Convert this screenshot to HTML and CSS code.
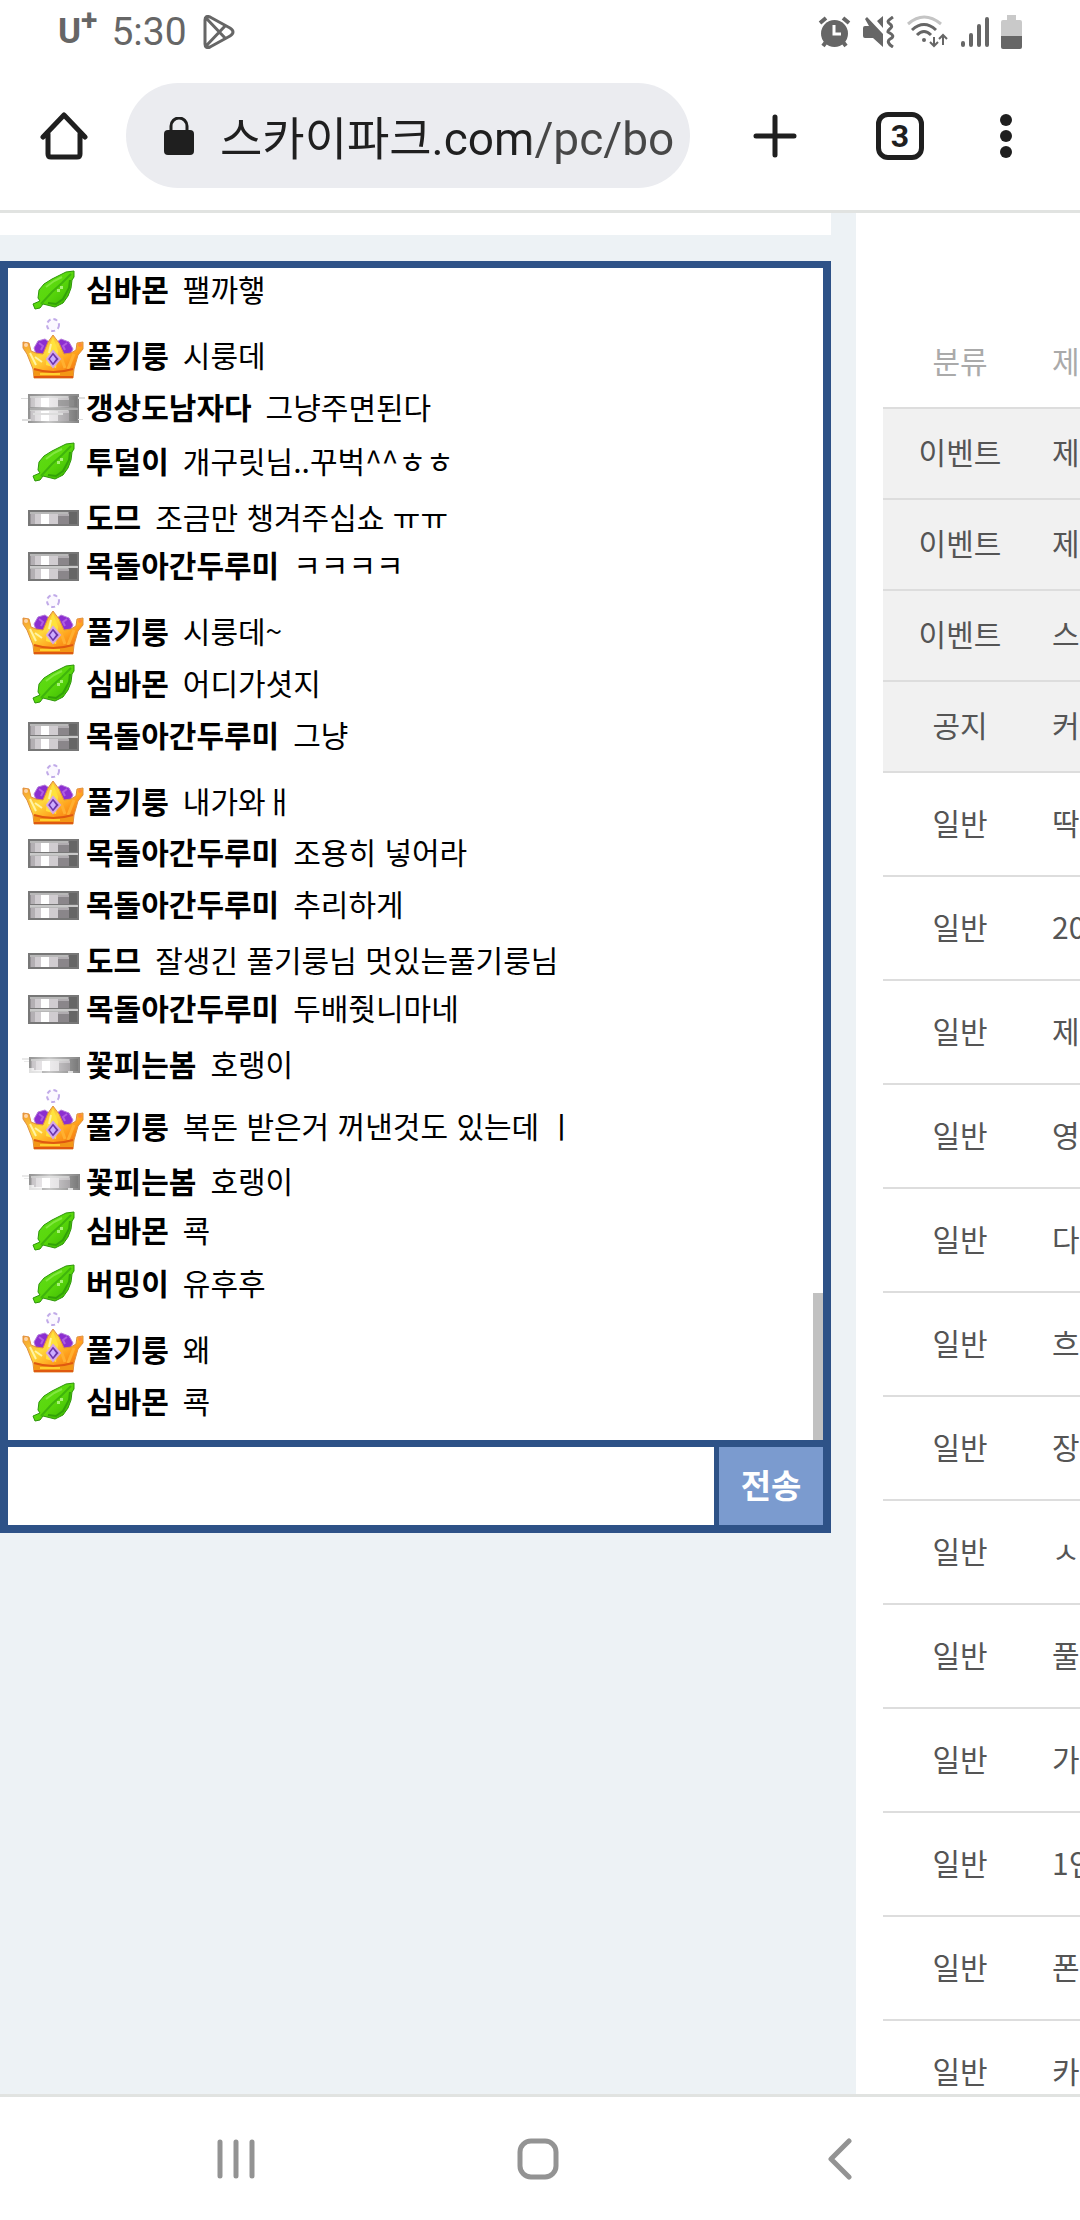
FILE: index.html
```html
<!DOCTYPE html>
<html lang="ko">
<head>
  <meta charset="UTF-8" />
  <title>스카이파크</title>
  <meta name="viewport" content="width=device-width, initial-scale=1.0" />
  <link rel="stylesheet" href="styles.css">
</head>
<body>

  <!-- Rank icons -->
  <svg class="defs" aria-hidden="true">
    <defs>
      <linearGradient id="leafFill" x1="0" y1="0" x2="1" y2="1">
        <stop offset="0" stop-color="#5fdc1c"/>
        <stop offset="0.5" stop-color="#5ad80c"/>
        <stop offset="1" stop-color="#35b000"/>
      </linearGradient>
      <linearGradient id="gold" x1="0" y1="0" x2="1" y2="1">
        <stop offset="0" stop-color="#f08a28"/>
        <stop offset="0.4" stop-color="#ffd83c"/>
        <stop offset="0.65" stop-color="#ffa01c"/>
        <stop offset="1" stop-color="#ec5a08"/>
      </linearGradient>
      <linearGradient id="worn" x1="0" y1="0" x2="1" y2="0">
        <stop offset="0" stop-color="#fff" stop-opacity="0.2"/>
        <stop offset="0.4" stop-color="#fff" stop-opacity="0.6"/>
        <stop offset="1" stop-color="#fff" stop-opacity="0.1"/>
      </linearGradient>
    </defs>
    <symbol id="leaf" viewBox="0 0 43 40">
      <path d="M42 1 34 2 28 5 20 9 12 14 7 20 6 28 8 31 1 34 3 39 8 38 11 34 15 35 23 37 31 33 36 26 39 18 40 10 42 7Z" fill="url(#leafFill)" stroke="#2d9608" stroke-width="1"/>
      <path d="M39 4 30 13 20 22 9 34" fill="none" stroke="#3fb40c" stroke-width="2"/>
      <path d="M30 7 22 11 14 17" fill="none" stroke="#82e83f" stroke-width="2"/>
      <path d="M25 19h3v-3h3v3h-3v3h-3z" fill="#a7f277"/>
      <path d="M38 10 37 18 31 29 24 34 16 33" fill="none" stroke="#32a208" stroke-width="2"/>
    </symbol>
    <symbol id="crown" viewBox="0 0 62 62">
      <circle cx="31" cy="8" r="6" fill="#fbf8ff" stroke="#c0aae8" stroke-width="2" stroke-dasharray="4 3"/>
      <path d="M12 31 16 24 23 22 31 28 39 22 47 25 51 32 47 40 15 40Z" fill="#8c2ed0" stroke="#b47adb"/>
      <path d="M17 26l4 3-2 4M45 26l-4 3 2 4" fill="none" stroke="#b05ce0" stroke-width="2"/>
      <path d="M1 25 7 26 9 34 14 36 21 37 26 25 31 18 37 26 42 37 49 36 54 33 55 26 61 25 61 32 56 38 52 52 51 61 12 61 11 52 5 37 1 31Z" fill="url(#gold)" stroke="#e09040" stroke-width="1"/>
      <path d="M31 20 25 35 24 48 34 51 36 34Z" fill="#ffe23c"/>
      <path d="M29 27 27 36M8 36 14 48M13 40l7 5" fill="none" stroke="#fff3a4" stroke-width="2"/>
      <path d="M39 40 43 51M52 37 46 52" fill="none" stroke="#ffb030" stroke-width="3"/>
      <path d="M12 52Q31 58 51 52L51 60H12Z" fill="#f39716"/>
      <path d="M12 52Q31 58 51 52M12 60H51" fill="none" stroke="#df5910" stroke-width="2"/>
      <path d="M18 57H38" stroke="#ffd030" stroke-width="2"/>
      <path d="M31 34 38 42 31 50 25 42Z" fill="#6b35ad" stroke="#d5a5e5" stroke-width="2"/>
      <path d="M31 38 34 42 31 46 28 42Z" fill="#ccadff"/>
      <circle cx="4" cy="28" r="2" fill="#ffd5a8"/>
      <circle cx="58" cy="28" r="2" fill="#ff8a3c"/>
    </symbol>
    <symbol id="bar" viewBox="0 0 51 16">
      <path fill="#777" d="M0 0h51v16H0z"/>
      <path fill="#969296" d="M2 2h47v12H2z"/>
      <path fill="#d0ccd0" d="M3 4h27v10H3z"/>
      <path fill="#b3afb3" d="M3 4h4v10H3z"/>
      <path fill="#fff" d="M13 4h8v10h-8z"/>
      <path fill="#8a868a" d="M30 6h11v8H30z"/>
      <path fill="#b0acb0" d="M30 4h11v2H30z"/>
      <path fill="#666" d="M41 2h8v12h-8z"/>
      <path fill="#b8b8b8" d="M2 2h38v2H2z"/>
    </symbol>
    <symbol id="bars" viewBox="0 0 51 29">
      <use href="#bar" width="51" height="16"/>
      <use href="#bar" y="13" width="51" height="16"/>
      <path fill="#c9c9c9" d="M2 14h48v2H2z"/>
    </symbol>
    <symbol id="bar-worn" viewBox="0 0 58 18">
      <use href="#bar" x="7" y="1" width="51" height="16"/>
      <path fill="url(#worn)" d="M7 0h51v18H7z"/>
      <path fill="#e9e9e9" d="M0 2h7v2H0zM2 5h5v1H2z"/>
      <path fill="#fff" d="M7 12h5v2h8v4H7zM46 15h5v3h-5z" opacity="0.7"/>
    </symbol>
    <symbol id="bars-worn" viewBox="0 0 64 29">
      <use href="#bars" x="7" y="0" width="51" height="29"/>
      <path fill="url(#worn)" d="M7 0h51v29H7z"/>
      <path fill="#8d8d8d" d="M7 0h51v2H7zM7 14h51v2H7zM37 6h16v6H37z" opacity="0.6"/>
      <path fill="#ddd" d="M0 4h7v1H0zM1 25h9v2H1zM57 3h7v2h-7zM57 25h5v1h-5zM12 19h30v2H12z"/>
    </symbol>
  </svg>

  <!-- Status bar -->
  <div class="status">
    <div class="status-group">
      <span class="carrier">U<sup>+</sup></span>
      <span class="time">5:30</span>
      <svg class="play" viewBox="0 0 32 34" fill="none" stroke="#666" stroke-width="3" stroke-linejoin="round">
        <path d="M2 5Q2 0 7 2L27 13Q33 17 27 21L7 32Q2 34 2 29ZM3 3 23 24M3 31 23 10"/>
      </svg>
    </div>
    <div class="status-group status-icons">
      <svg width="33" height="32" viewBox="0 0 33 32" fill="none" stroke="#666" stroke-width="4">
        <circle cx="16.500" cy="17.500" r="13.500" fill="#666" stroke="none"/>
        <path d="M2 7 8 2M31 7 25 2" stroke-width="4"/>
        <path d="M5 30 8 26M28 30 25 26"/>
        <path d="M16 9v9h7" stroke="#fff" stroke-width="3"/>
      </svg>
      <svg width="32" height="32" viewBox="0 0 32 32" fill="#666">
        <path d="M0 12Q0 10 2 10H6L2 3 4 1 20 18V31L10 22H2Q0 22 0 20ZM14 5 20 0V12Z"/>
        <path d="M30 1C24 5 24 6 27 8 32 12 24 13 25 16 31 19 31 21 27 23 24 25 25 28 30 31" fill="none" stroke="#666" stroke-width="3"/>
      </svg>
      <svg width="42" height="34" viewBox="0 0 42 34" fill="none" stroke="#666" stroke-width="3">
        <path d="M1 9Q17-5 34 9" stroke="#c4c4c4"/>
        <path d="M5 15Q17 4 29 15M10 20Q17 13 24 20"/>
        <circle cx="17" cy="25" r="2" fill="#666" stroke="none"/>
        <path d="M27 22v9M23 27l4 4 4-4M36 30v-9M32 24l4-4 4 4" stroke-width="2"/>
      </svg>
      <svg width="28" height="32" viewBox="0 0 28 32" stroke="#666" stroke-width="4" stroke-linecap="round">
        <path d="M2 27v2M10 19v10M18 10v19M26 3v26"/>
      </svg>
      <svg width="21" height="34" viewBox="0 0 21 34">
        <path d="M6 0h9v5h4q2 0 2 2v14H0V7q0-2 2-2h4z" fill="#c9c9c9"/>
        <path d="M0 21h21v11q0 2-2 2H2q-2 0-2-2z" fill="#666"/>
      </svg>
    </div>
  </div>

  <!-- Browser toolbar -->
  <header class="toolbar">
    <button class="tool" aria-label="홈">
      <svg width="48" height="48" viewBox="0 0 48 48" fill="none" stroke="#1f1f1f" stroke-width="5" stroke-linejoin="round" stroke-linecap="round">
        <path d="M3 25 24 3 45 25M8 22V42Q8 45 11 45H37Q40 45 40 42V22"/>
      </svg>
    </button>
    <label class="address">
      <svg width="30" height="38" viewBox="0 0 30 38">
        <path d="M7 15V9a8 8 0 0 1 16 0v6" fill="none" stroke="#1f1f1f" stroke-width="3"/>
        <rect x="0" y="13" width="30" height="25" rx="4" fill="#1f1f1f"/>
      </svg>
      <input type="text" value="스카이파크.com/pc/bo" aria-label="주소" />
    </label>
    <button class="tool" aria-label="새 탭">
      <svg width="44" height="44" viewBox="0 0 44 44" stroke="#1f1f1f" stroke-width="5" stroke-linecap="round">
        <path d="M22 3v38M3 22h38"/>
      </svg>
    </button>
    <button class="tool tabs">3</button>
    <button class="tool" aria-label="메뉴">
      <svg width="12" height="44" viewBox="0 0 12 44" fill="#1f1f1f">
        <circle cx="6" cy="6" r="6"/><circle cx="6" cy="22" r="6"/><circle cx="6" cy="38" r="6"/>
      </svg>
    </button>
  </header>

  <main>
    <!-- Chat -->
    <div class="side">
      <div class="strip"></div>
      <section class="chat">
        <ul class="log">
          <li class="leaf"><svg><use href="#leaf"/></svg><b>심바몬</b><span>팰까햏</span></li>
          <li class="crown"><svg><use href="#crown"/></svg><b>풀기룽</b><span>시룽데</span></li>
          <li class="bars-worn"><svg><use href="#bars-worn"/></svg><b>갱상도남자다</b><span>그냥주면된다</span></li>
          <li class="leaf"><svg><use href="#leaf"/></svg><b>투덜이</b><span>개구릿님..꾸벅^^ㅎㅎ</span></li>
          <li class="bar"><svg><use href="#bar"/></svg><b>도므</b><span>조금만 챙겨주십쇼 ㅠㅠ</span></li>
          <li class="bars"><svg><use href="#bars"/></svg><b>목돌아간두루미</b><span>ㅋㅋㅋㅋ</span></li>
          <li class="crown"><svg><use href="#crown"/></svg><b>풀기룽</b><span>시룽데~</span></li>
          <li class="leaf"><svg><use href="#leaf"/></svg><b>심바몬</b><span>어디가셧지</span></li>
          <li class="bars"><svg><use href="#bars"/></svg><b>목돌아간두루미</b><span>그냥</span></li>
          <li class="crown"><svg><use href="#crown"/></svg><b>풀기룽</b><span>내가와ㅐ</span></li>
          <li class="bars"><svg><use href="#bars"/></svg><b>목돌아간두루미</b><span>조용히 넣어라</span></li>
          <li class="bars"><svg><use href="#bars"/></svg><b>목돌아간두루미</b><span>추리하게</span></li>
          <li class="bar"><svg><use href="#bar"/></svg><b>도므</b><span>잘생긴 풀기룽님 멋있는풀기룽님</span></li>
          <li class="bars"><svg><use href="#bars"/></svg><b>목돌아간두루미</b><span>두배줫니마네</span></li>
          <li class="bar bar-worn"><svg><use href="#bar-worn"/></svg><b>꽃피는봄</b><span>호랭이</span></li>
          <li class="crown"><svg><use href="#crown"/></svg><b>풀기룽</b><span>복돈 받은거 꺼낸것도 있는데 ㅣ</span></li>
          <li class="bar bar-worn"><svg><use href="#bar-worn"/></svg><b>꽃피는봄</b><span>호랭이</span></li>
          <li class="leaf"><svg><use href="#leaf"/></svg><b>심바몬</b><span>쿅</span></li>
          <li class="leaf"><svg><use href="#leaf"/></svg><b>버밍이</b><span>유후후</span></li>
          <li class="crown"><svg><use href="#crown"/></svg><b>풀기룽</b><span>왜</span></li>
          <li class="leaf"><svg><use href="#leaf"/></svg><b>심바몬</b><span>쿅</span></li>
        </ul>
        <form class="send">
          <input type="text" aria-label="메시지" />
          <button type="button">전송</button>
        </form>
      </section>
    </div>

    <!-- Board -->
    <section class="board">
      <table>
        <thead>
          <tr><th>분류</th><th>제</th></tr>
        </thead>
        <tbody>
          <tr class="notice"><td>이벤트</td><td>제</td></tr>
          <tr class="notice"><td>이벤트</td><td>제</td></tr>
          <tr class="notice"><td>이벤트</td><td>스</td></tr>
          <tr class="notice"><td>공지</td><td>커</td></tr>
          <tr><td>일반</td><td>딱</td></tr>
          <tr><td>일반</td><td>20</td></tr>
          <tr><td>일반</td><td>제</td></tr>
          <tr><td>일반</td><td>영</td></tr>
          <tr><td>일반</td><td>다</td></tr>
          <tr><td>일반</td><td>흐</td></tr>
          <tr><td>일반</td><td>장</td></tr>
          <tr><td>일반</td><td>ㅅ</td></tr>
          <tr><td>일반</td><td>풀</td></tr>
          <tr><td>일반</td><td>가</td></tr>
          <tr><td>일반</td><td>1인</td></tr>
          <tr><td>일반</td><td>폰</td></tr>
          <tr><td>일반</td><td>카</td></tr>
        </tbody>
      </table>
    </section>
  </main>

  <!-- Navigation bar -->
  <nav>
    <button aria-label="최근 앱">
      <svg width="40" height="42" viewBox="0 0 40 42" stroke="#939393" stroke-width="5" stroke-linecap="round">
        <path d="M4 4v34M20 4v34M36 4v34"/>
      </svg>
    </button>
    <button aria-label="홈 화면">
      <svg width="42" height="42" viewBox="0 0 42 42" fill="none" stroke="#939393" stroke-width="5">
        <rect x="3" y="3" width="36" height="36" rx="11"/>
      </svg>
    </button>
    <button aria-label="뒤로">
      <svg width="24" height="42" viewBox="0 0 24 42" fill="none" stroke="#939393" stroke-width="5" stroke-linecap="round" stroke-linejoin="round">
        <path d="M21 3 3 21 21 39"/>
      </svg>
    </button>
  </nav>

</body>
</html>
```
FILE: styles.css
```css
* {
  box-sizing: border-box;
}

body {
  font-family: "Noto Sans CJK KR", sans-serif;
  font-size: 30px;
  margin: 0;
  height: 100vh;
  display: flex;
  flex-direction: column;
  overflow: hidden;
  background: #fff;
}

button, input {
  font-family: inherit;
  border: none;
  padding: 0;
  margin: 0;
}

button {
  background: none;
  cursor: pointer;
}

svg {
  display: block;
  flex: none;
}

.defs {
  position: absolute;
  width: 0;
  height: 0;
}

/* status bar */
.status {
  flex: none;
  height: 64px;
  display: flex;
  justify-content: space-between;
  align-items: center;
  padding: 0 58px;
  font-family: Roboto, sans-serif;
  color: #666;
}

.status-group {
  display: flex;
  align-items: center;
  gap: 14px;
}

.status-icons {
  gap: 12px;
}

.carrier {
  font-size: 35px;
  font-weight: 700;
  line-height: 40px;
}

.carrier sup {
  font-size: 30px;
  line-height: 0;
}

.time {
  font-size: 39px;
  line-height: 44px;
}

.play {
  width: 32px;
  height: 34px;
  margin-left: 2px;
}

/* toolbar */
.toolbar {
  flex: none;
  height: 149px;
  display: flex;
  align-items: center;
  padding: 0 68px 3px 40px;
  border-bottom: 3px solid #e1e3e1;
}

.tool {
  flex: none;
}

.address {
  flex: 1;
  min-width: 0;
  height: 105px;
  margin: 0 63px 0 38px;
  padding: 0 16px 0 38px;
  display: flex;
  align-items: center;
  gap: 26px;
  border-radius: 53px;
  background: #ebecf0;
}

/* host name is darker than the path */
.address input {
  flex: 1;
  min-width: 0;
  height: 70px;
  padding-bottom: 2px;
  font-family: Roboto, "Noto Sans CJK KR", sans-serif;
  font-size: 46px;
  color: transparent;
  background: linear-gradient(90deg, #1f1f1f 310px, #474747 310px);
  background-clip: text;
  -webkit-background-clip: text;
}

.tabs {
  width: 48px;
  height: 48px;
  margin: 0 76px 0 79px;
  border: 5px solid #1f1f1f;
  border-radius: 12px;
  font-family: Roboto, sans-serif;
  font-size: 32px;
  font-weight: 700;
  line-height: 38px;
  color: #1f1f1f;
}

/* page */
main {
  flex: 1;
  min-height: 0;
  display: grid;
  grid-template-columns: 831fr 224fr;
  gap: 25px;
  overflow: hidden;
  background: #edf2f5;
}

.side {
  min-width: 0;
}

.strip {
  height: 22px;
  margin-bottom: 26px;
  background: #fff;
}

.chat {
  border: 8px solid #2e5287;
  border-top-width: 7px;
  background: #fff;
}

.log {
  position: relative;
  height: 1172px;
  margin: 0;
  padding: 0 14px 12px;
  display: flex;
  flex-direction: column;
  justify-content: flex-end;
  overflow: hidden;
  list-style: none;
  color: #000;
}

/* scroll thumb */
.log::after {
  content: "";
  position: absolute;
  right: 0;
  bottom: 0;
  width: 10px;
  height: 147px;
  background: #c1c1c1;
}

.log li {
  flex: none;
  display: grid;
  grid-template-columns: 62px auto 1fr;
  align-items: center;
  line-height: 44px;
  white-space: pre;
}

.log svg {
  justify-self: center;
  width: 51px;
  height: 29px;
}

.log b, .log span {
  padding-bottom: 4px;
}

.log b {
  margin-left: 2px;
}

.log span {
  margin-left: 14px;
}

.log .leaf {
  height: 53px;
}

.log .leaf svg {
  width: 43px;
  height: 40px;
}

.log .crown {
  height: 65px;
  padding-top: 15px;
}

.log .crown svg {
  width: 62px;
  height: 62px;
  margin-top: -16px;
}

.log .bars {
  height: 52px;
}

.log .bar {
  height: 52px;
  padding-top: 6px;
}

.log .bar svg {
  height: 16px;
}

.log .bar-worn svg {
  width: 58px;
  height: 18px;
  justify-self: start;
}

.log .bars-worn {
  height: 54px;
}

.log .bars-worn svg {
  width: 64px;
}

.send {
  display: flex;
  height: 85px;
  border-top: 7px solid #2e5287;
}

.send input {
  flex: 1;
  min-width: 0;
  padding: 0 14px;
  font-size: 30px;
}

.send button {
  width: 109px;
  padding-bottom: 4px;
  border-left: 5px solid #2e5287;
  background: #7b9bcf;
  color: #fff;
  font-size: 33px;
  font-weight: 700;
}

/* board */
.board {
  min-width: 0;
  padding: 104px 0 0 27px;
  overflow: hidden;
  background: #fff;
}

table {
  width: 100%;
  table-layout: fixed;
  border-collapse: collapse;
  color: #555;
}

th, td {
  height: 104px;
  padding: 0 0 5px;
  border-bottom: 2px solid #ddd;
  line-height: 44px;
  text-align: center;
  white-space: nowrap;
}

th {
  height: 91px;
  font-weight: 400;
  color: #aaa;
}

th:first-child {
  width: 154px;
}

th:last-child, td:last-child {
  padding-left: 15px;
  text-align: left;
}

.notice td {
  height: 91px;
  background: #f1f1f1;
}

/* navigation bar */
nav {
  flex: none;
  height: 126px;
  display: grid;
  grid-template-columns: repeat(3, 1fr);
  justify-items: center;
  align-items: center;
  padding: 0 89px 0 85px;
  border-top: 3px solid #e1e3e1;
}
```
